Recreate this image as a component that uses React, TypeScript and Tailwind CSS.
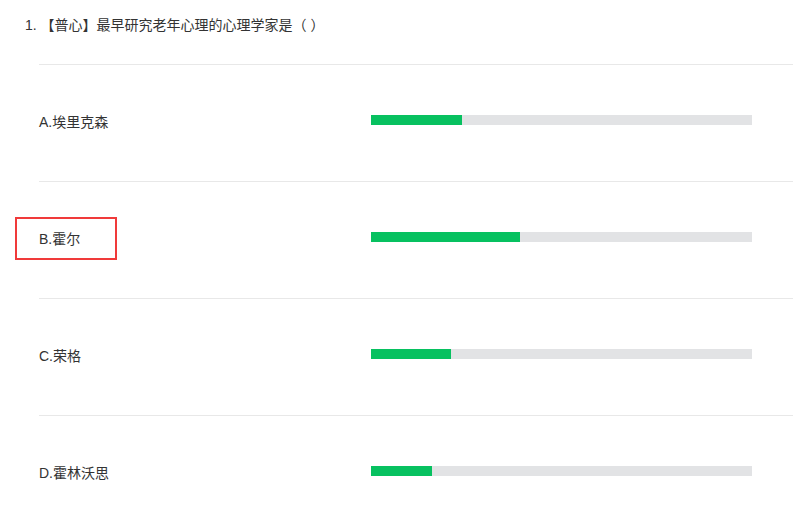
const options = [
  { label: "A.埃里克森", pct: 24 },
  { label: "B.霍尔", pct: 39, marked: true },
  { label: "C.荣格", pct: 21 },
  { label: "D.霍林沃思", pct: 16 },
];

export default function App() {
  return (
    <div
      className="min-h-screen bg-white text-[14px] text-[#333]"
      style={{ fontFamily: '"Liberation Sans", "Noto Sans CJK SC", sans-serif' }}
    >
      {/* Question */}
      <div className="px-[25px] pt-[15px] h-[64px] leading-[20px]">
        1. 【普心】最早研究老年心理的心理学家是（ ）
      </div>

      {/* Options */}
      <div className="ml-[39px]">
        {options.map((o) => (
          <div
            key={o.label}
            className="relative flex h-[117px] items-center border-t border-[#e8e8e8] pb-[6px]"
          >
            <div className="w-[332px] pt-[4px]">{o.label}</div>
            <div className="h-[10px] w-[381px] bg-[#e2e3e5]">
              <div className="h-full bg-[#07c160]" style={{ width: `${o.pct}%` }} />
            </div>
            {o.marked && (
              <div className="absolute left-[-24px] top-[35px] h-[43px] w-[102px] border-2 border-[#f03a3a]" />
            )}
          </div>
        ))}
      </div>
    </div>
  );
}
